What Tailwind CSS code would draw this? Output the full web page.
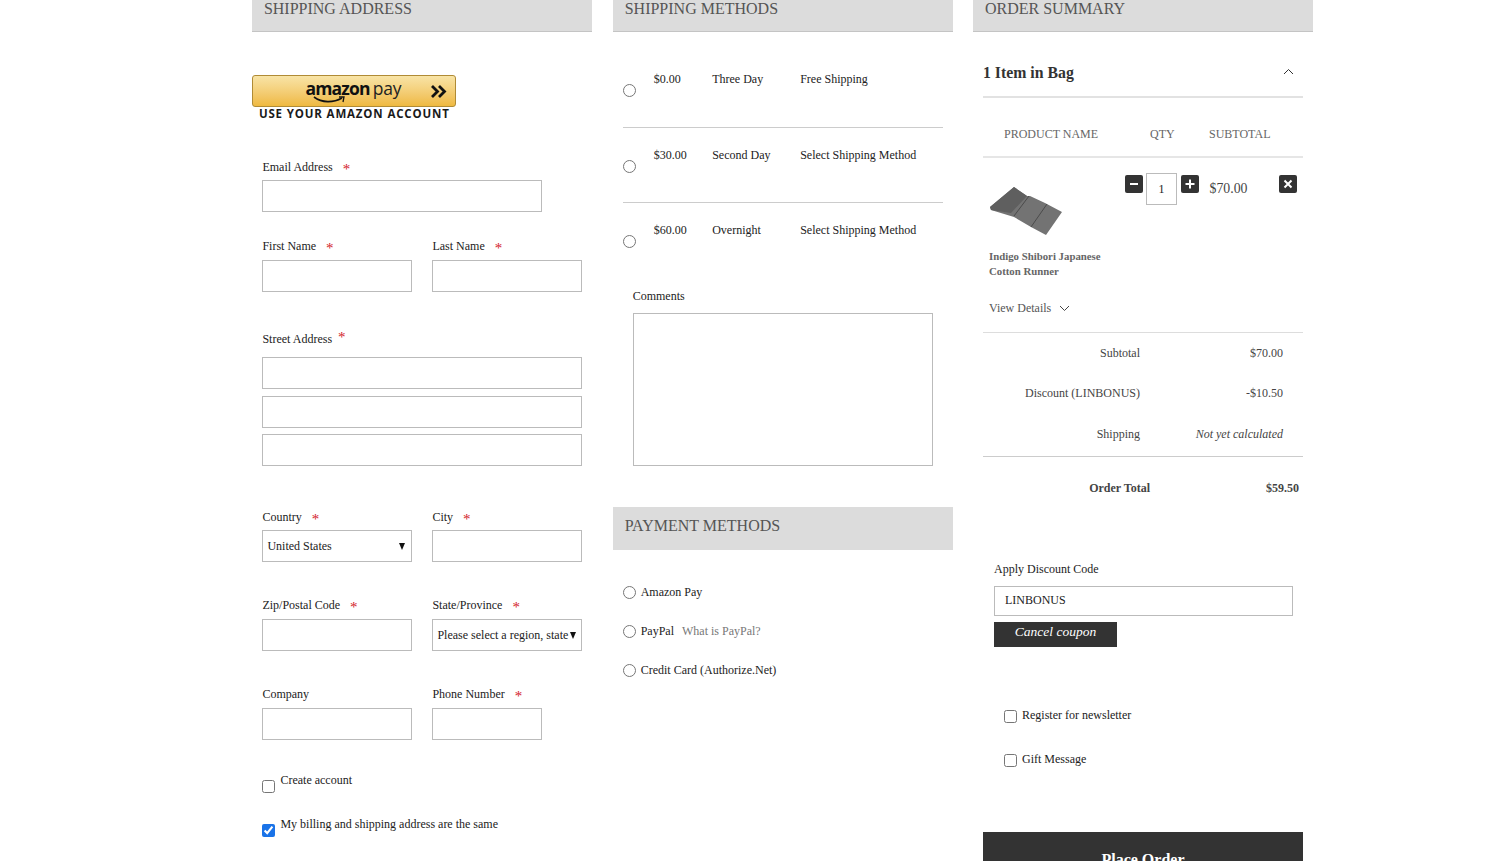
<!DOCTYPE html>
<html lang="en">
  <head>
    <meta charset="UTF-8" />
    <title>Checkout</title>
    <script src="https://cdn.jsdelivr.net/npm/@tailwindcss/browser@4"></script>
  </head>
  <body class="bg-white text-[#222] font-['Liberation_Serif',serif] text-[12px]">
    <div class="h-[861px] overflow-hidden">
      <div class="grid grid-cols-[340px_340px_340px] gap-x-[20.300px] pl-[252.400px]">

        <!-- Shipping address -->
        <div>
          <div class="h-[32px] bg-[#dcdcdc] border-b border-[#c4c4c4] pl-[11.500px] pt-[1px] text-[16px] leading-[16px] text-[#555]">SHIPPING ADDRESS</div>

          <div class="mt-[43px] relative w-[204px] h-[32px] rounded-[3px] border border-[#b08b35] bg-gradient-to-b from-[#f8e4a6] to-[#efb93f] flex items-start pt-[2px]">
            <span class="ml-[52px] font-['Open_Sans',sans-serif] text-[17.500px] leading-[20px] font-bold tracking-[-0.8px] text-[#111]">amazon</span>
            <span class="ml-[3px] font-['Open_Sans',sans-serif] text-[17.500px] leading-[20px] tracking-[-0.3px] text-[#222]">pay</span>
            <svg class="absolute left-[60px] top-[19px]" width="34" height="10" viewBox="0 0 34 10" fill="none">
              <path d="M1 2C9 8 20 8 29 3" stroke="#111" stroke-width="1.6" />
              <path d="M26 2L31 2L30 7" stroke="#111" stroke-width="1.3" />
            </svg>
            <svg class="absolute left-[177px] top-[8px]" width="17" height="15" viewBox="0 0 17 15" fill="none">
              <path d="M2 2L7.500 7.500L2 13M9 2L14.500 7.500L9 13" stroke="#111" stroke-width="2.800" />
            </svg>
          </div>
          <div class="pl-[6.500px] h-[14px] font-['Open_Sans',sans-serif] text-[11.500px] leading-[14px] font-bold tracking-[0.85px] text-[#1a1a1a]">USE YOUR AMAZON ACCOUNT</div>

          <div class="px-[10px]">
            <div class="mt-[38px] h-[16px] leading-[16px] mb-[5px]">Email Address <span class="ml-[7px] text-[#d3222a] text-[15px] leading-[0] align-[-3px]">*</span></div>
            <input type="text" class="block w-[280px] h-[32px] border border-[#bbb] bg-white" />

            <div class="mt-[26px] grid grid-cols-[150px_150px] gap-x-[20px]">
              <div>
                <div class="h-[16px] leading-[16px] mb-[6px]">First Name <span class="ml-[7px] text-[#d3222a] text-[15px] leading-[0] align-[-3px]">*</span></div>
                <input type="text" class="block w-full h-[32px] border border-[#bbb]" />
              </div>
              <div>
                <div class="h-[16px] leading-[16px] mb-[6px]">Last Name <span class="ml-[7px] text-[#d3222a] text-[15px] leading-[0] align-[-3px]">*</span></div>
                <input type="text" class="block w-full h-[32px] border border-[#bbb]" />
              </div>
            </div>

            <div class="mt-[39px] h-[16px] leading-[16px] mb-[10px]">Street Address <span class="ml-[3px] text-[#d3222a] text-[15px] leading-[0] align-[1px]">*</span></div>
            <div class="flex flex-col gap-[6.500px]">
              <input type="text" class="block w-[320px] h-[32px] border border-[#bbb]" />
              <input type="text" class="block w-[320px] h-[32px] border border-[#bbb]" />
              <input type="text" class="block w-[320px] h-[32px] border border-[#bbb]" />
            </div>

            <div class="mt-[43px] grid grid-cols-[150px_150px] gap-x-[20px]">
              <div>
                <div class="h-[16px] leading-[16px] mb-[5px]">Country <span class="ml-[7px] text-[#d3222a] text-[15px] leading-[0] align-[-3px]">*</span></div>
                <div class="relative h-[32px]">
                  <select class="appearance-none block w-full h-full border border-[#bbb] bg-white pl-[4px] pr-[14px]">
                    <option>United States</option>
                  </select>
                  <svg class="absolute right-[7px] top-[13px]" width="6" height="7" viewBox="0 0 6 7"><path d="M0 0H6L3 7Z" fill="#111" /></svg>
                </div>
              </div>
              <div>
                <div class="h-[16px] leading-[16px] mb-[5px]">City <span class="ml-[7px] text-[#d3222a] text-[15px] leading-[0] align-[-3px]">*</span></div>
                <input type="text" class="block w-full h-[32px] border border-[#bbb]" />
              </div>
            </div>

            <div class="mt-[35px] grid grid-cols-[150px_150px] gap-x-[20px]">
              <div>
                <div class="h-[16px] leading-[16px] mb-[6px]">Zip/Postal Code <span class="ml-[7px] text-[#d3222a] text-[15px] leading-[0] align-[-3px]">*</span></div>
                <input type="text" class="block w-full h-[32px] border border-[#bbb]" />
              </div>
              <div>
                <div class="h-[16px] leading-[16px] mb-[6px]">State/Province <span class="ml-[7px] text-[#d3222a] text-[15px] leading-[0] align-[-3px]">*</span></div>
                <div class="relative h-[32px]">
                  <select class="appearance-none block w-full h-full border border-[#bbb] bg-white pl-[4px] pr-[12px]">
                    <option>Please select a region, state or province</option>
                  </select>
                  <svg class="absolute right-[6px] top-[13px]" width="6" height="7" viewBox="0 0 6 7"><path d="M0 0H6L3 7Z" fill="#111" /></svg>
                </div>
              </div>
            </div>

            <div class="mt-[35px] grid grid-cols-[150px_110px] gap-x-[20px]">
              <div>
                <div class="h-[16px] leading-[16px] mb-[6px]">Company</div>
                <input type="text" class="block w-full h-[32px] border border-[#bbb]" />
              </div>
              <div>
                <div class="h-[16px] leading-[16px] mb-[6px]">Phone Number <span class="ml-[7px] text-[#d3222a] text-[15px] leading-[0] align-[-3px]">*</span></div>
                <input type="text" class="block w-full h-[32px] border border-[#bbb]" />
              </div>
            </div>

            <div class="mt-[32px] flex items-start">
              <input type="checkbox" class="mt-[8px] w-[13px] h-[13px]" />
              <span class="ml-[5px] leading-[16px]">Create account</span>
            </div>
            <div class="mt-[23px] flex items-start">
              <input type="checkbox" checked class="mt-[8px] w-[13px] h-[13px] accent-[#1a73e8]" />
              <span class="ml-[5px] leading-[16px]">My billing and shipping address are the same</span>
            </div>
          </div>
        </div>

        <!-- Shipping and payment methods -->
        <div>
          <div class="h-[32px] bg-[#dcdcdc] border-b border-[#c4c4c4] pl-[12px] pt-[1px] text-[16px] leading-[16px] text-[#555]">SHIPPING METHODS</div>

          <div class="mx-[10px] mt-[20px]">
            <div class="flex h-[75.500px] border-b border-[#ccc]">
              <input type="radio" name="ship" class="mt-[32px] w-[13px] h-[13px]" />
              <span class="ml-[18px] mt-[19px] w-[58.500px] leading-[16px]">$0.00</span>
              <span class="mt-[19px] w-[88px] leading-[16px]">Three Day</span>
              <span class="mt-[19px] leading-[16px]">Free Shipping</span>
            </div>
            <div class="flex h-[75.500px] border-b border-[#ccc]">
              <input type="radio" name="ship" class="mt-[32px] w-[13px] h-[13px]" />
              <span class="ml-[18px] mt-[19px] w-[58.500px] leading-[16px]">$30.00</span>
              <span class="mt-[19px] w-[88px] leading-[16px]">Second Day</span>
              <span class="mt-[19px] leading-[16px]">Select Shipping Method</span>
            </div>
            <div class="flex h-[75.500px]">
              <input type="radio" name="ship" class="mt-[32px] w-[13px] h-[13px]" />
              <span class="ml-[18px] mt-[19px] w-[58.500px] leading-[16px]">$60.00</span>
              <span class="mt-[19px] w-[88px] leading-[16px]">Overnight</span>
              <span class="mt-[19px] leading-[16px]">Select Shipping Method</span>
            </div>
          </div>

          <div class="px-[20px] mt-[9px]">
            <div class="h-[16px] leading-[16px] mb-[9px]">Comments</div>
            <textarea class="block w-[300px] h-[153px] border border-[#bbb] resize-none"></textarea>
          </div>

          <div class="mt-[41px] h-[43px] bg-[#dcdcdc] pl-[12px] pt-[10px] text-[16px] leading-[18px] text-[#555]">PAYMENT METHODS</div>

          <div class="mt-[34px] pl-[10px] flex flex-col gap-[23px]">
            <div class="flex items-center h-[16px]">
              <input type="radio" name="pay" class="mt-[2px] w-[13px] h-[13px]" />
              <span class="ml-[5px]">Amazon Pay</span>
            </div>
            <div class="flex items-center h-[16px]">
              <input type="radio" name="pay" class="mt-[2px] w-[13px] h-[13px]" />
              <span class="ml-[5px]">PayPal</span>
              <span class="ml-[8px] text-[#777]">What is PayPal?</span>
            </div>
            <div class="flex items-center h-[16px]">
              <input type="radio" name="pay" class="mt-[2px] w-[13px] h-[13px]" />
              <span class="ml-[5px]">Credit Card (Authorize.Net)</span>
            </div>
          </div>
        </div>

        <!-- Order summary -->
        <div>
          <div class="h-[32px] bg-[#dcdcdc] border-b border-[#c4c4c4] pl-[12px] pt-[1px] text-[16px] leading-[16px] text-[#555]">ORDER SUMMARY</div>

          <div class="px-[10px]">
            <div class="h-[66px] pt-[33px] border-b-2 border-[#e2e2e2] flex justify-between">
              <span class="text-[15.800px] leading-[16px] font-bold text-[#333]">1 Item in Bag</span>
              <svg class="mr-[9px] mt-[3px]" width="11" height="7" viewBox="0 0 11 7" fill="none"><path d="M1 6L5.500 1.500L10 6" stroke="#333" stroke-width="1" /></svg>
            </div>

            <div class="h-[60px] pt-[28px] border-b-2 border-[#e6e6e6] flex text-[#666] leading-[16px]">
              <span class="w-[167px] pl-[21px]">PRODUCT NAME</span>
              <span class="w-[59px]">QTY</span>
              <span>SUBTOTAL</span>
            </div>

            <div class="flex h-[174.500px] border-b border-[#ddd]">
              <div class="w-[142px] pl-[6px]">
                <svg class="mt-[27px]" width="74" height="52" viewBox="0 0 74 52">
                  <path d="M1 22L25 2L38 11L41 11L56 18L73 27L57 50L42 42L25 32L2 25Z" fill="#737373" />
                  <path d="M1 22L25 2L38 11L22 28L2 25Z" fill="#5f5f5f" />
                  <path d="M40 11L25 31M58 19L42 42" stroke="#4b4b4b" stroke-width="1" fill="none" />
                </svg>
                <div class="mt-[12px] text-[10.800px] leading-[15px] font-bold text-[#666]">Indigo Shibori Japanese<br />Cotton Runner</div>
                <div class="mt-[21px] flex items-center h-[16px] text-[#555]">
                  View Details
                  <svg class="ml-[8px]" width="11" height="7" viewBox="0 0 11 7" fill="none"><path d="M1 1L5.500 5.500L10 1" stroke="#444" stroke-width="1" /></svg>
                </div>
              </div>
              <div class="w-[18px] h-[18px] mt-[17px] rounded-[2px] bg-[#333] flex items-center justify-center">
                <svg width="12" height="12" viewBox="0 0 12 12"><path d="M2 6H10" stroke="#fff" stroke-width="2" /></svg>
              </div>
              <input type="text" value="1" class="ml-[3px] mt-[15px] w-[31px] h-[32px] border border-[#bbb] text-center text-[12px]" />
              <div class="ml-[4px] w-[18px] h-[18px] mt-[17px] rounded-[2px] bg-[#333] flex items-center justify-center">
                <svg width="12" height="12" viewBox="0 0 12 12"><path d="M1.500 6H10.500M6 1.500V10.500" stroke="#fff" stroke-width="2" /></svg>
              </div>
              <span class="ml-[10.500px] mt-[22px] w-[69.500px] text-[13.800px] leading-[18px] text-[#444]">$70.00</span>
              <div class="w-[18px] h-[18px] mt-[17px] rounded-[2px] bg-[#333] flex items-center justify-center">
                <svg width="12" height="12" viewBox="0 0 12 12"><path d="M2.500 2.500L9.500 9.500M9.500 2.500L2.500 9.500" stroke="#fff" stroke-width="2" /></svg>
              </div>
            </div>

            <div class="pt-[12px] pb-[14px] border-b border-[#ccc] flex flex-col gap-[24.500px] text-[#444] leading-[16px]">
              <div class="flex h-[16px]"><span class="w-[157px] text-right">Subtotal</span><span class="w-[143px] text-right">$70.00</span></div>
              <div class="flex h-[16px]"><span class="w-[157px] text-right">Discount (LINBONUS)</span><span class="w-[143px] text-right">-$10.50</span></div>
              <div class="flex h-[16px]"><span class="w-[157px] text-right">Shipping</span><span class="w-[143px] text-right italic">Not yet calculated</span></div>
            </div>

            <div class="mt-[23px] flex h-[16px] leading-[16px] font-bold text-[#444]">
              <span class="w-[167px] text-right">Order Total</span><span class="w-[149px] text-right">$59.50</span>
            </div>

            <div class="pl-[11px] mt-[65px]">
              <div class="h-[16px] leading-[16px] mb-[9px]">Apply Discount Code</div>
              <input type="text" value="LINBONUS" class="block w-[299px] h-[30px] border border-[#bbb] pl-[10px] text-[12px]" />
              <div class="mt-[6px] w-[123px] h-[25.500px] bg-[#333] text-white text-center italic text-[13.500px] leading-[20px]">Cancel coupon</div>
            </div>

            <div class="pl-[21px] mt-[60px] flex flex-col gap-[28px]">
              <div class="flex items-start h-[16px]">
                <input type="checkbox" class="mt-[3px] w-[13px] h-[13px]" />
                <span class="ml-[5px] leading-[16px]">Register for newsletter</span>
              </div>
              <div class="flex items-start h-[16px]">
                <input type="checkbox" class="mt-[3px] w-[13px] h-[13px]" />
                <span class="ml-[5px] leading-[16px]">Gift Message</span>
              </div>
            </div>

            <div class="mt-[65px] h-[60px] bg-[#333] text-white text-center font-bold text-[16px] leading-[20px] pt-[18px]">Place Order</div>
          </div>
        </div>

      </div>
    </div>
  </body>
</html>
